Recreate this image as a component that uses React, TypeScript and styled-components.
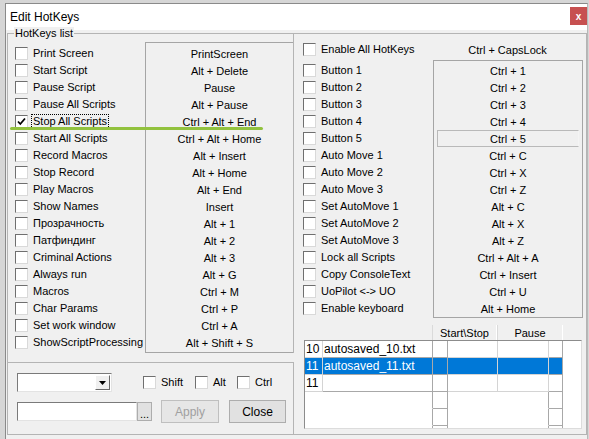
import React from "react";
import styled, { createGlobalStyle } from "styled-components";

const GlobalStyle = createGlobalStyle`
  html, body { margin: 0; padding: 0; background: #d6d6d6; }
  body {
    font-family: "Liberation Sans", Arial, sans-serif;
    font-size: 11px;
    color: #000;
  }
`;

const leftItems: [string, string][] = [
  ["Print Screen", "PrintScreen"],
  ["Start Script", "Alt + Delete"],
  ["Pause Script", "Pause"],
  ["Pause All Scripts", "Alt + Pause"],
  ["Stop All Scripts", "Ctrl + Alt + End"],
  ["Start All Scripts", "Ctrl + Alt + Home"],
  ["Record Macros", "Alt + Insert"],
  ["Stop Record", "Alt + Home"],
  ["Play Macros", "Alt + End"],
  ["Show Names", "Insert"],
  ["Прозрачность", "Alt + 1"],
  ["Патфиндинг", "Alt + 2"],
  ["Criminal Actions", "Alt + 3"],
  ["Always run", "Alt + G"],
  ["Macros", "Ctrl + M"],
  ["Char Params", "Ctrl + P"],
  ["Set work window", "Ctrl + A"],
  ["ShowScriptProcessing", "Alt + Shift + S"],
];

const rightItems: [string, string][] = [
  ["Button 1", "Ctrl + 1"],
  ["Button 2", "Ctrl + 2"],
  ["Button 3", "Ctrl + 3"],
  ["Button 4", "Ctrl + 4"],
  ["Button 5", "Ctrl + 5"],
  ["Auto Move 1", "Ctrl + C"],
  ["Auto Move 2", "Ctrl + X"],
  ["Auto Move 3", "Ctrl + Z"],
  ["Set AutoMove 1", "Alt + C"],
  ["Set AutoMove 2", "Alt + X"],
  ["Set AutoMove 3", "Alt + Z"],
  ["Lock all Scripts", "Ctrl + Alt + A"],
  ["Copy ConsoleText", "Ctrl + Insert"],
  ["UoPilot <-> UO", "Ctrl + U"],
  ["Enable keyboard", "Alt + Home"],
];

const scripts = [
  { n: "10", name: "autosaved_10.txt", sel: false },
  { n: "11", name: "autosaved_11.txt", sel: true },
  { n: "11", name: "", sel: false },
];

const Frame = styled.div`
  position: relative;
  width: 589px;
  height: 439px;
  overflow: hidden;
  background: #d6d6d6;
  padding: 3px 0 0 5px;
  box-sizing: border-box;
`;

const Window = styled.div`
  width: 583px;
  height: 100%;
  box-sizing: border-box;
  border-top: 1px solid #8a8a8a;
  border-left: 1px solid #8a8a8a;
  border-right: 1px solid #b8b8b8;
  background: #f0f0f0;
  display: flex;
  flex-direction: column;
`;

const TitleBar = styled.div`
  height: 26px;
  flex: none;
  background: #fff;
  display: flex;
  align-items: flex-start;
  padding-left: 4px;
`;

const Title = styled.span`
  font-size: 12px;
  line-height: 12px;
  margin-top: 7px;
`;

const CloseX = styled.div`
  margin-left: auto;
  margin-top: 3px;
  width: 17px;
  height: 18px;
  background: #c75050;
  color: #fff;
  font-weight: bold;
  font-size: 10px;
  display: flex;
  align-items: center;
  justify-content: center;
`;

const Body = styled.div`
  flex: 1;
  padding: 3px 0 0 1px;
`;

const GroupBox = styled.div`
  position: relative;
  width: 580px;
  height: 402px;
  box-sizing: border-box;
  border: 1px solid #b4b4b4;
  display: flex;
`;

const Legend = styled.span`
  position: absolute;
  top: -7px;
  left: 6px;
  padding: 0 1px;
  line-height: 13px;
  background: #f0f0f0;
`;

const LeftCol = styled.div`
  width: 286px;
  flex: none;
  display: flex;
  flex-direction: column;
`;

const UpperPane = styled.div`
  height: 319px;
  box-sizing: border-box;
  border-right: 1px solid #b4b4b4;
  display: flex;
`;

const LowerPane = styled.div`
  margin-top: 9px;
  flex: 1;
  box-sizing: border-box;
  border-top: 1px solid #b4b4b4;
  border-right: 1px solid #b4b4b4;
  padding: 10px 0 0 9px;
`;

const CheckList = styled.div<{ $top: number; $left: number; $width: number }>`
  width: ${(p) => p.$width}px;
  flex: none;
  box-sizing: border-box;
  padding-top: ${(p) => p.$top}px;
  padding-left: ${(p) => p.$left}px;
`;

const CheckRow = styled.div`
  height: 17px;
  display: flex;
  align-items: center;
  white-space: nowrap;
`;

const Box = styled.span`
  width: 13px;
  height: 13px;
  flex: none;
  box-sizing: border-box;
  border: 1px solid;
  border-color: #6f6f6f #d9d9d9 #d9d9d9 #6f6f6f;
  background: #fff;
  margin-right: 5px;
  display: flex;
  align-items: center;
  justify-content: center;
`;

const Label = styled.span<{ $focus?: boolean }>`
  line-height: 13px;
  padding: 0 1px;
  margin-left: -1px;
  outline: ${(p) => (p.$focus ? "1px dotted #000" : "none")};
  outline-offset: 0;
`;

const KeyBox = styled.div<{ $top: number; $pad: number; $right?: boolean }>`
  margin-top: ${(p) => p.$top}px;
  flex: 1;
  box-sizing: border-box;
  border: 1px solid #a5a5a5;
  border-right: ${(p) => (p.$right ? "1px solid #a5a5a5" : "none")};
  padding-top: ${(p) => p.$pad}px;
`;

const KeyRow = styled.div<{ $focus?: boolean }>`
  height: 17px;
  display: flex;
  align-items: center;
  justify-content: center;
  white-space: nowrap;
  box-sizing: border-box;
  margin: 0 3px;
  border: 1px solid ${(p) => (p.$focus ? "#b9b9b9" : "transparent")};
  border-right-color: ${(p) => (p.$focus ? "#f4f4f4" : "transparent")};
  border-bottom-color: ${(p) => (p.$focus ? "#b9b9b9" : "transparent")};
`;

const RightCol = styled.div`
  flex: 1;
  display: flex;
  flex-direction: column;
`;

const HeadRow = styled.div`
  display: flex;
  height: 17px;
  margin-top: 7px;
`;

const CapsKey = styled.div`
  width: 149px;
  display: flex;
  align-items: center;
  justify-content: center;
`;

const RightMain = styled.div`
  display: flex;
  margin-top: 2px;
  height: 258px;
`;

const Gap = styled.div<{ $w: number }>`
  width: ${(p) => p.$w}px;
  flex: none;
`;

const TableWrap = styled.div`
  margin: 7px 0 0 10px;
  width: 278px;
`;

const TableHead = styled.div`
  display: flex;
  margin-left: 128px;
  height: 15px;
`;

const HeadCell = styled.div<{ $w: number }>`
  width: ${(p) => p.$w}px;
  box-sizing: border-box;
  border-left: 1px solid #dadada;
  border-right: 1px solid #ffffff;
  display: flex;
  align-items: center;
  justify-content: center;
`;

const List = styled.div`
  height: 89px;
  box-sizing: border-box;
  border: 1px solid #8c8c8c;
  border-right-color: #dcdcdc;
  border-bottom-color: #dcdcdc;
  background: #fff;
  overflow: hidden;
`;

const ListRow = styled.div`
  display: grid;
  grid-template-columns: 18px 110px 15px 50px 51px 14px 1fr;
  height: 17px;
`;

const Cell = styled.div<{ $sel?: boolean; $line?: string; $pad?: number }>`
  box-sizing: border-box;
  border-right: 1px solid ${(p) => p.$line || "transparent"};
  border-bottom: 1px solid ${(p) => p.$line || "transparent"};
  background: ${(p) => (p.$sel ? "#0078d7" : "transparent")};
  color: ${(p) => (p.$sel ? "#fff" : "#000")};
  padding-left: ${(p) => p.$pad ?? 0}px;
  display: flex;
  align-items: center;
  font-size: 12px;
  white-space: nowrap;
  overflow: hidden;
`;

const CtrlRow = styled.div<{ $top?: number; $h: number }>`
  display: flex;
  align-items: center;
  height: ${(p) => p.$h}px;
  margin-top: ${(p) => p.$top ?? 0}px;
`;

const Combo = styled.div`
  width: 95px;
  height: 19px;
  box-sizing: border-box;
  border: 1px solid;
  border-color: #7a7a7a #e3e3e3 #e3e3e3 #7a7a7a;
  background: #fff;
  display: flex;
  justify-content: flex-end;
  padding: 1px;
`;

const DropBtn = styled.div`
  width: 15px;
  box-sizing: border-box;
  background: #f0f0f0;
  border: 1px solid;
  border-color: #fff #696969 #696969 #fff;
  display: flex;
  align-items: center;
  justify-content: center;
`;

const ModCheck = styled.div<{ $w: number; $ml?: number }>`
  width: ${(p) => p.$w}px;
  margin-left: ${(p) => p.$ml ?? 0}px;
  display: flex;
  align-items: center;
  height: 17px;
`;

const Input = styled.div`
  width: 120px;
  height: 19px;
  box-sizing: border-box;
  border: 1px solid;
  border-color: #7a7a7a #e3e3e3 #e3e3e3 #7a7a7a;
  background: #fff;
`;

const DotsBtn = styled.div`
  width: 15px;
  height: 19px;
  box-sizing: border-box;
  border: 1px solid #adadad;
  background: #e1e1e1;
  display: flex;
  align-items: flex-end;
  justify-content: center;
  line-height: 12px;
`;

const Button = styled.div<{ $w: number; $ml: number; $disabled?: boolean }>`
  width: ${(p) => p.$w}px;
  height: 23px;
  margin-left: ${(p) => p.$ml}px;
  box-sizing: border-box;
  border: 1px solid ${(p) => (p.$disabled ? "#bfbfbf" : "#adadad")};
  background: ${(p) => (p.$disabled ? "#e6e6e6" : "#e1e1e1")};
  color: ${(p) => (p.$disabled ? "#a0a0a0" : "#000")};
  display: flex;
  align-items: center;
  justify-content: center;
  font-size: 12px;
`;

const Highlight = styled.div`
  position: absolute;
  left: 10px;
  top: 127px;
  width: 253px;
  height: 3px;
  border-radius: 2px;
  background: #92c23e;
`;

const Check = ({ checked }: { checked?: boolean }) => (
  <Box>
    {checked && (
      <svg width="9" height="9" viewBox="0 0 9 9">
        <path d="M1 4.5 L3.3 7 L8 1.5" fill="none" stroke="#000" strokeWidth="1.8" />
      </svg>
    )}
  </Box>
);

const App = () => {
  return (
    <>
      <GlobalStyle />
      <Frame>
        <Window>
          <TitleBar>
            <Title>Edit HotKeys</Title>
            <CloseX>x</CloseX>
          </TitleBar>
          <Body>
            <GroupBox>
              <Legend>HotKeys list</Legend>
              <LeftCol>
                <UpperPane>
                  <CheckList $top={11} $left={7} $width={137}>
                    {leftItems.map(([label], i) => (
                      <CheckRow key={label}>
                        <Check checked={i === 4} />
                        <Label $focus={i === 4}>{label}</Label>
                      </CheckRow>
                    ))}
                  </CheckList>
                  <KeyBox $top={8} $pad={2}>
                    {leftItems.map(([label, key]) => (
                      <KeyRow key={label}>{key}</KeyRow>
                    ))}
                  </KeyBox>
                </UpperPane>
                <LowerPane>
                  <CtrlRow $h={19}>
                    <Combo>
                      <DropBtn>
                        <svg width="7" height="4" viewBox="0 0 7 4">
                          <path d="M0 0 H7 L3.5 4 Z" fill="#000" />
                        </svg>
                      </DropBtn>
                    </Combo>
                    <ModCheck $w={52} $ml={31}>
                      <Check />
                      <Label>Shift</Label>
                    </ModCheck>
                    <ModCheck $w={42}>
                      <Check />
                      <Label>Alt</Label>
                    </ModCheck>
                    <ModCheck $w={40}>
                      <Check />
                      <Label>Ctrl</Label>
                    </ModCheck>
                  </CtrlRow>
                  <CtrlRow $h={23} $top={8}>
                    <Input />
                    <DotsBtn>...</DotsBtn>
                    <Button $w={58} $ml={9} $disabled>
                      Apply
                    </Button>
                    <Button $w={57} $ml={10}>
                      Close
                    </Button>
                  </CtrlRow>
                </LowerPane>
              </LeftCol>
              <RightCol>
                <HeadRow>
                  <CheckList $top={0} $left={9} $width={139}>
                    <CheckRow>
                      <Check />
                      <Label>Enable All HotKeys</Label>
                    </CheckRow>
                  </CheckList>
                  <CapsKey>Ctrl + CapsLock</CapsKey>
                </HeadRow>
                <RightMain>
                  <CheckList $top={2} $left={9} $width={139}>
                    {rightItems.map(([label]) => (
                      <CheckRow key={label}>
                        <Check />
                        <Label>{label}</Label>
                      </CheckRow>
                    ))}
                  </CheckList>
                  <KeyBox $top={0} $pad={1} $right>
                    {rightItems.map(([label, key], i) => (
                      <KeyRow key={label} $focus={i === 4}>
                        {key}
                      </KeyRow>
                    ))}
                  </KeyBox>
                  <Gap $w={3} />
                </RightMain>
                <TableWrap>
                  <TableHead>
                    <HeadCell $w={65}>Start\Stop</HeadCell>
                    <HeadCell $w={66}>Pause</HeadCell>
                  </TableHead>
                  <List>
                    {scripts.map((s, i) => (
                      <ListRow key={i}>
                        <Cell $sel={s.sel} $line="#d4d4d4" $pad={1}>
                          {s.n}
                        </Cell>
                        <Cell $sel={s.sel} $line="#a8a8a8" $pad={1}>
                          {s.name}
                        </Cell>
                        <Cell $sel={s.sel} $line="#a8a8a8" />
                        <Cell $sel={s.sel} $line="#d4d4d4" />
                        <Cell $sel={s.sel} $line="#d4d4d4" />
                        <Cell $sel={s.sel} $line="#a8a8a8" />
                        <Cell />
                      </ListRow>
                    ))}
                    {[0, 1, 2].map((i) => (
                      <ListRow key={"e" + i}>
                        <Cell />
                        <Cell $line="#a8a8a8" style={{ borderBottomColor: "transparent" }} />
                        <Cell $line="#a8a8a8" />
                        <Cell />
                        <Cell $line="#a8a8a8" style={{ borderBottomColor: "transparent" }} />
                        <Cell $line="#a8a8a8" />
                        <Cell />
                      </ListRow>
                    ))}
                  </List>
                </TableWrap>
              </RightCol>
            </GroupBox>
          </Body>
        </Window>
        <Highlight />
      </Frame>
    </>
  );
};

export default App;
